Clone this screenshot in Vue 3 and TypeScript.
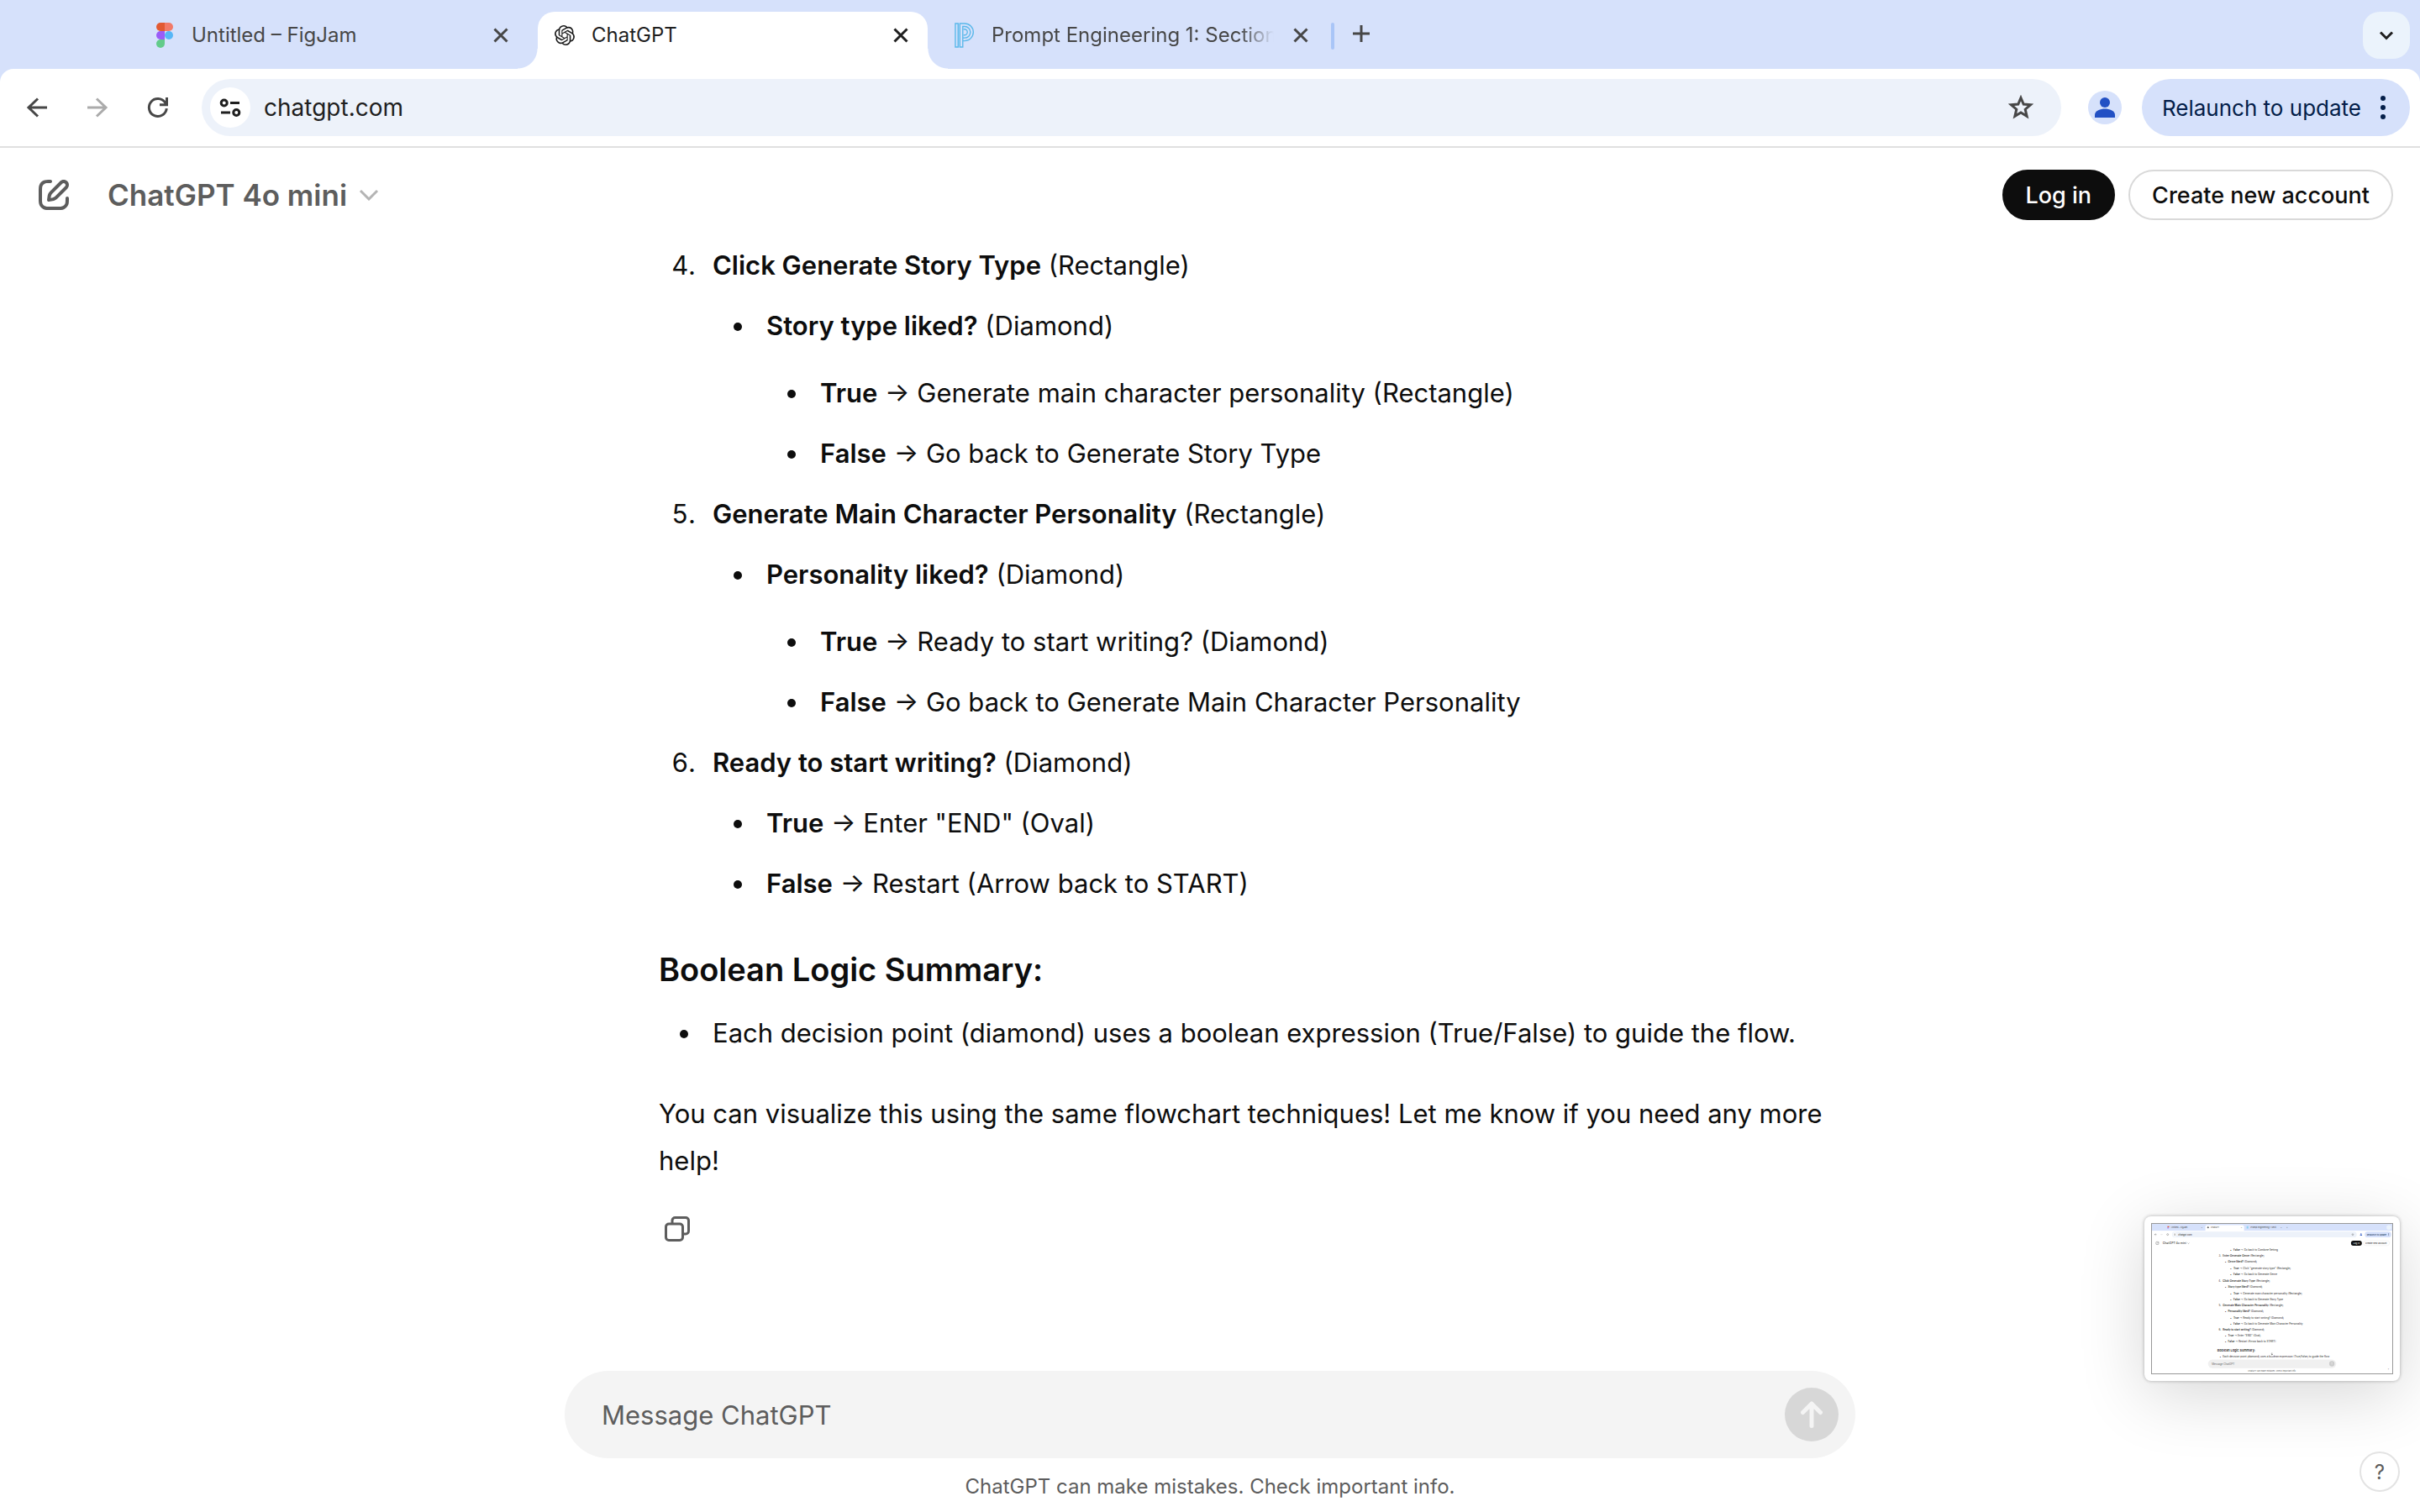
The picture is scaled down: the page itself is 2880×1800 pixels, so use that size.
<script setup lang="ts">
import { ref } from 'vue'

interface Branch {
  label: string
  text: string
}
interface SubItem extends Branch {
  branches: Branch[]
}
interface Step {
  title: string
  shape: string
  items: SubItem[]
}
interface MiniLine {
  x: number
  y: number
  marker: string
  bold: string
  text: string
}

const message = ref('')

const steps: Step[] = [
  {
    title: 'Click Generate Story Type',
    shape: '(Rectangle)',
    items: [
      {
        label: 'Story type liked?',
        text: '(Diamond)',
        branches: [
          { label: 'True', text: '→ Generate main character personality (Rectangle)' },
          { label: 'False', text: '→ Go back to Generate Story Type' },
        ],
      },
    ],
  },
  {
    title: 'Generate Main Character Personality',
    shape: '(Rectangle)',
    items: [
      {
        label: 'Personality liked?',
        text: '(Diamond)',
        branches: [
          { label: 'True', text: '→ Ready to start writing? (Diamond)' },
          { label: 'False', text: '→ Go back to Generate Main Character Personality' },
        ],
      },
    ],
  },
  {
    title: 'Ready to start writing?',
    shape: '(Diamond)',
    items: [
      { label: 'True', text: '→ Enter "END" (Oval)', branches: [] },
      { label: 'False', text: '→ Restart (Arrow back to START)', branches: [] },
    ],
  },
]

const miniLines: MiniLine[] = [
  { x: 976, y: 322, marker: '•', bold: 'False', text: '→ Go back to Combine Setting' },
  { x: 848, y: 396, marker: '3.', bold: 'Enter Generate Genre', text: '(Rectangle)' },
  { x: 912, y: 468, marker: '•', bold: 'Genre liked?', text: '(Diamond)' },
  { x: 976, y: 548, marker: '•', bold: 'True', text: '→ Click "generate story type" (Rectangle)' },
  { x: 976, y: 620, marker: '•', bold: 'False', text: '→ Go back to Generate Genre' },
  { x: 848, y: 694, marker: '4.', bold: 'Click Generate Story Type', text: '(Rectangle)' },
  { x: 912, y: 766, marker: '•', bold: 'Story type liked?', text: '(Diamond)' },
  { x: 976, y: 846, marker: '•', bold: 'True', text: '→ Generate main character personality (Rectangle)' },
  { x: 976, y: 918, marker: '•', bold: 'False', text: '→ Go back to Generate Story Type' },
  { x: 848, y: 990, marker: '5.', bold: 'Generate Main Character Personality', text: '(Rectangle)' },
  { x: 912, y: 1062, marker: '•', bold: 'Personality liked?', text: '(Diamond)' },
  { x: 976, y: 1142, marker: '•', bold: 'True', text: '→ Ready to start writing? (Diamond)' },
  { x: 976, y: 1214, marker: '•', bold: 'False', text: '→ Go back to Generate Main Character Personality' },
  { x: 848, y: 1286, marker: '6.', bold: 'Ready to start writing?', text: '(Diamond)' },
  { x: 912, y: 1358, marker: '•', bold: 'True', text: '→ Enter "END" (Oval)' },
  { x: 912, y: 1430, marker: '•', bold: 'False', text: '→ Restart (Arrow back to START)' },
]
</script>

<template>
  <div class="browser">
    <div class="tab-strip">
      <div class="tabs">
        <div class="tab">
          <svg class="favicon" viewBox="0 0 20 30" width="20" height="30" aria-hidden="true">
            <path d="M5 0h5v10H5A5 5 0 0 1 5 0z" fill="#e25a32" />
            <path d="M10 0h5a5 5 0 0 1 0 10h-5z" fill="#f27a68" />
            <path d="M5 10h5v10H5a5 5 0 0 1 0-10z" fill="#9a5cf7" />
            <circle cx="15" cy="15" r="5" fill="#56b6f7" />
            <path d="M5 20h5v5a5 5 0 1 1-5-5z" fill="#62cb8a" />
          </svg>
          <span class="tab-title">Untitled – FigJam</span>
          <button class="tab-close" type="button" aria-label="Close tab">
            <svg viewBox="0 0 24 24" width="24" height="24"><path d="M4.500 4.500l15 15M19.500 4.500l-15 15" /></svg>
          </button>
        </div>
        <div class="tab active">
          <svg class="favicon" viewBox="0 0 24 24" width="24" height="24" aria-hidden="true">
            <path fill="#1b1b1b" d="M22.2819 9.8211a5.9847 5.9847 0 0 0-.5157-4.9108 6.0462 6.0462 0 0 0-6.5098-2.9A6.0651 6.0651 0 0 0 4.9807 4.1818a5.9847 5.9847 0 0 0-3.9977 2.9 6.0462 6.0462 0 0 0 .7427 7.0966 5.98 5.98 0 0 0 .511 4.9107 6.051 6.051 0 0 0 6.5146 2.9001A5.9847 5.9847 0 0 0 13.2599 24a6.0557 6.0557 0 0 0 5.7718-4.2058 5.9894 5.9894 0 0 0 3.9977-2.9001 6.0557 6.0557 0 0 0-.7475-7.0729zm-9.022 12.6081a4.4755 4.4755 0 0 1-2.8764-1.0408l.1419-.0804 4.7783-2.7582a.7948.7948 0 0 0 .3927-.6813v-6.7369l2.02 1.1686a.071.071 0 0 1 .038.052v5.5826a4.504 4.504 0 0 1-4.4945 4.4944zm-9.6607-4.1254a4.4708 4.4708 0 0 1-.5346-3.0137l.142.0852 4.783 2.7582a.7712.7712 0 0 0 .7806 0l5.8428-3.3685v2.3324a.0804.0804 0 0 1-.0332.0615L9.74 19.9502a4.4992 4.4992 0 0 1-6.1408-1.6464zM2.3408 7.8956a4.485 4.485 0 0 1 2.3655-1.9728V11.6a.7664.7664 0 0 0 .3879.6765l5.8144 3.3543-2.0201 1.1685a.0757.0757 0 0 1-.071 0l-4.8303-2.7865A4.504 4.504 0 0 1 2.3408 7.872zm16.5963 3.8558L13.1038 8.364 15.1192 7.2a.0757.0757 0 0 1 .071 0l4.8303 2.7913a4.4944 4.4944 0 0 1-.6765 8.1042v-5.6772a.79.79 0 0 0-.407-.667zm2.0107-3.0231l-.142-.0852-4.7735-2.7818a.7759.7759 0 0 0-.7854 0L9.409 9.2297V6.8974a.0662.0662 0 0 1 .0284-.0615l4.8303-2.7866a4.4992 4.4992 0 0 1 6.6802 4.66zM8.3065 12.863l-2.02-1.1638a.0804.0804 0 0 1-.038-.0567V6.0742a4.4992 4.4992 0 0 1 7.3757-3.4537l-.142.0805L8.704 5.459a.7948.7948 0 0 0-.3927.6813zm1.0976-2.3654l2.602-1.4998 2.6069 1.4998v2.9994l-2.5974 1.4997-2.6067-1.4997Z" />
          </svg>
          <span class="tab-title">ChatGPT</span>
          <button class="tab-close" type="button" aria-label="Close tab">
            <svg viewBox="0 0 24 24" width="24" height="24"><path d="M4.500 4.500l15 15M19.500 4.500l-15 15" /></svg>
          </button>
        </div>
        <div class="tab">
          <svg class="favicon" viewBox="0 0 26 32" width="26" height="32" aria-hidden="true" fill="none" stroke="#5ab8ea" stroke-width="1.500">
            <path d="M1 .8h3.600v30.400H1z" />
            <path d="M6.800 31.200V.8h6.200a11 11 0 0 1 0 22.400h-2.400v-3.800H13a7.400 7.400 0 0 0 0-14.800h-2.400v26.600z" />
            <path d="M11.500 8.200h1.200a3.800 3.800 0 0 1 0 7.600h-1.200" />
          </svg>
          <span class="tab-title faded">Prompt Engineering 1: Section</span>
          <button class="tab-close" type="button" aria-label="Close tab">
            <svg viewBox="0 0 24 24" width="24" height="24"><path d="M4.500 4.500l15 15M19.500 4.500l-15 15" /></svg>
          </button>
        </div>
      </div>
      <span class="tab-divider"></span>
      <button class="new-tab" type="button" aria-label="New tab">
        <svg viewBox="0 0 24 24" width="24" height="24"><path d="M12 2v20M2 12h20" /></svg>
      </button>
      <button class="tab-search" type="button" aria-label="Search tabs">
        <svg viewBox="0 0 24 24" width="24" height="24"><path d="M5 8.500l7 7 7-7" /></svg>
      </button>
    </div>

    <div class="toolbar-wrap">
      <div class="toolbar">
        <div class="nav">
          <button type="button" aria-label="Back">
            <svg viewBox="0 0 24 24" width="24" height="24"><path d="M13 1.500L2 12l11 10.500M2 12h22" /></svg>
          </button>
          <button class="off" type="button" aria-label="Forward">
            <svg viewBox="0 0 24 24" width="24" height="24"><path d="M11 1.500L22 12 11 22.500M22 12H0" /></svg>
          </button>
          <button type="button" aria-label="Reload">
            <svg viewBox="0 0 24 24" width="24" height="24"><path d="M22.300 13.200A10.500 10.500 0 1 1 20.500 6l2 2.300M22.500 0v8.700H14" /></svg>
          </button>
        </div>
        <div class="omnibox">
          <button class="site-info" type="button" aria-label="View site information">
            <svg viewBox="0 0 24 20" width="24" height="20"><circle cx="4.700" cy="4.500" r="3.500" /><path d="M12 4.500h11M1 16h11" /><circle cx="19.300" cy="16" r="3.500" /></svg>
          </button>
          <input class="address" type="text" value="chatgpt.com" aria-label="Address" />
          <button class="bookmark" type="button" aria-label="Bookmark this tab">
            <svg viewBox="0 0 30 30" width="30" height="30"><path d="M15 3.500l3.200 7.600 8.200.7-6.200 5.400 1.900 8.100-7.100-4.300-7.100 4.300 1.900-8.100-6.200-5.400 8.200-.7z" /></svg>
          </button>
        </div>
        <button class="profile" type="button" aria-label="Profile">
          <svg viewBox="0 0 24 24" width="24" height="24"><circle cx="12" cy="6" r="6" /><path d="M0 24v-3.500C0 16 7 13.500 12 13.500S24 16 24 20.500V24z" /></svg>
        </button>
        <button class="relaunch" type="button">
          <span>Relaunch to update</span>
          <svg viewBox="0 0 8 28" width="8" height="28"><circle cx="4" cy="3" r="3" /><circle cx="4" cy="14" r="3" /><circle cx="4" cy="25" r="3" /></svg>
        </button>
      </div>
    </div>

    <main class="page">
      <header class="page-header">
        <button class="new-chat" type="button" aria-label="New chat">
          <svg viewBox="0 0 24 24" width="48" height="48"><path fill="#5d5d5d" fill-rule="evenodd" d="M15.6729 3.91287C16.8918 2.69392 18.8682 2.69392 20.0871 3.91287C21.3061 5.13182 21.3061 7.10813 20.0871 8.32708L14.1499 14.2643C13.3849 15.0293 12.3925 15.5255 11.3215 15.6785L9.14142 15.9899C8.82983 16.0344 8.51546 15.9297 8.29289 15.7071C8.07033 15.4845 7.96554 15.1701 8.01005 14.8586L8.32149 12.6785C8.47449 11.6075 8.97072 10.615 9.7357 9.85006L15.6729 3.91287ZM18.6729 5.32708C18.235 4.88918 17.525 4.88918 17.0871 5.32708L11.1499 11.2643C10.6909 11.7233 10.3932 12.3187 10.3014 12.9613L10.1785 13.8215L11.0386 13.6986C11.6812 13.6068 12.2767 13.3091 12.7357 12.8501L18.6729 6.91287C19.1108 6.47497 19.1108 5.76499 18.6729 5.32708ZM11 3.99929C11.0004 4.55157 10.5531 4.99963 10.0008 5.00007C9.00227 5.00084 8.29769 5.00827 7.74651 5.06064C7.20685 5.11191 6.88488 5.20117 6.63803 5.32695C6.07354 5.61457 5.6146 6.07351 5.32698 6.63799C5.19279 6.90135 5.10062 7.24904 5.05118 7.8542C5.00078 8.47105 5 9.26336 5 10.4V13.6C5 14.7366 5.00078 15.5289 5.05118 16.1457C5.10062 16.7509 5.19279 17.0986 5.32698 17.3619C5.6146 17.9264 6.07354 18.3854 6.63803 18.673C6.90138 18.8072 7.24907 18.8993 7.85424 18.9488C8.47108 18.9992 9.26339 19 10.4 19H13.6C14.7366 19 15.5289 18.9992 16.1458 18.9488C16.7509 18.8993 17.0986 18.8072 17.362 18.673C17.9265 18.3854 18.3854 17.9264 18.673 17.3619C18.7988 17.1151 18.8881 16.7931 18.9393 16.2535C18.9917 15.7023 18.9991 14.9977 18.9999 13.9992C19.0003 13.4469 19.4484 12.9995 20.0007 13C20.553 13.0004 21.0003 13.4485 20.9999 14.0007C20.9991 14.9789 20.9932 15.7808 20.9304 16.4426C20.8664 17.116 20.7385 17.7136 20.455 18.2699C19.9757 19.2107 19.2108 19.9756 18.27 20.455C17.6777 20.7568 17.0375 20.8826 16.3086 20.9421C15.6008 21 14.7266 21 13.6428 21H10.3572C9.27339 21 8.39925 21 7.69138 20.9421C6.96253 20.8826 6.32234 20.7568 5.73005 20.455C4.78924 19.9756 4.02433 19.2107 3.54497 18.2699C3.24318 17.6776 3.11737 17.0374 3.05782 16.3086C2.99998 15.6007 2.99999 14.7266 3 13.6428V10.3572C2.99999 9.27337 2.99998 8.39922 3.05782 7.69134C3.11737 6.96249 3.24318 6.3223 3.54497 5.73001C4.02433 4.7892 4.78924 4.0243 5.73005 3.54493C6.28633 3.26149 6.88399 3.13358 7.55735 3.06961C8.21919 3.00673 9.02103 3.00083 9.99922 3.00007C10.5515 2.99964 10.9996 3.447 11 3.99929Z" /></svg>
        </button>
        <button class="model" type="button">
          <span>ChatGPT 4o mini</span>
          <svg viewBox="0 0 24 14" width="24" height="14"><path d="M2 2l10 10L22 2" /></svg>
        </button>
        <div class="auth">
          <button class="login" type="button">Log in</button>
          <button class="signup" type="button">Create new account</button>
        </div>
      </header>

      <article class="thread">
        <ol start="4">
          <li v-for="step in steps" :key="step.title">
            <strong>{{ step.title }}</strong> {{ step.shape }}
            <ul>
              <li v-for="item in step.items" :key="item.label">
                <strong>{{ item.label }}</strong> {{ item.text }}
                <ul v-if="item.branches.length" class="branches">
                  <li v-for="b in item.branches" :key="b.label">
                    <strong>{{ b.label }}</strong> {{ b.text }}
                  </li>
                </ul>
              </li>
            </ul>
          </li>
        </ol>
        <h3>Boolean Logic Summary:</h3>
        <ul>
          <li>Each decision point (diamond) uses a boolean expression (True/False) to guide the flow.</li>
        </ul>
        <p>You can visualize this using the same flowchart techniques! Let me know if you need any more help!</p>
        <button class="copy" type="button" aria-label="Copy">
          <svg viewBox="0 0 30 30" width="30" height="30">
            <rect x="1.500" y="9" width="20" height="19.500" rx="3.500" />
            <path d="M9 9V5A3.500 3.500 0 0 1 12.500 1.500H25A3.500 3.500 0 0 1 28.500 5V17.500A3.500 3.500 0 0 1 25 21h-3.500" />
          </svg>
        </button>
      </article>

      <footer class="dock">
        <form class="composer" @submit.prevent>
          <input v-model="message" type="text" placeholder="Message ChatGPT" aria-label="Message ChatGPT" />
          <button type="submit" aria-label="Send message">
            <svg viewBox="0 0 26 32" width="26" height="32"><path d="M13 29.500V3M2.500 13.500L13 3l10.500 10.500" /></svg>
          </button>
        </form>
        <p class="notice">ChatGPT can make mistakes. Check important info.</p>
      </footer>
    </main>

    <div class="shot">
      <svg viewBox="0 0 2880 1800" preserveAspectRatio="none" role="img" aria-label="Screenshot preview">
        <rect width="2880" height="1800" fill="#fff" />
        <rect width="2880" height="82" fill="#d6e1fb" />
        <rect x="640" y="14" width="464" height="80" rx="20" fill="#fff" />
        <rect x="186" y="28" width="20" height="14" fill="#e25a32" />
        <rect x="186" y="42" width="12" height="14" fill="#9a5cf7" />
        <circle cx="672" cy="42" r="10" fill="#555" />
        <rect x="1135" y="28" width="20" height="28" fill="#8fd0f2" />
        <rect x="2812" y="14" width="56" height="56" rx="20" fill="#ebf3fc" />
        <g font-size="24" fill="#444">
          <text x="229" y="51">Untitled – FigJam</text>
          <text x="705" y="51">ChatGPT</text>
          <text x="1181" y="51">Prompt Engineering 1: Secti</text>
          <text x="588" y="51">×</text>
          <text x="1064" y="51">×</text>
          <text x="1540" y="51">×</text>
          <text x="1612" y="51">+</text>
        </g>
        <rect x="240" y="94" width="2214" height="68" rx="34" fill="#edf2fa" />
        <rect x="2550" y="94" width="318" height="68" rx="34" fill="#d6e1fb" />
        <circle cx="274" cy="128" r="24" fill="#fff" />
        <g fill="none" stroke="#555" stroke-width="4">
          <path d="M44 117l-11 11 11 11M33 128h23M262 122h24M262 134h24" />
          <circle cx="188" cy="128" r="10" />
          <circle cx="2406" cy="128" r="9" />
          <rect x="48" y="216" width="32" height="32" rx="8" />
          <path d="M60 238l20-20M428 229l10 9 10-9" />
        </g>
        <path d="M104 128h23" stroke="#bbb" stroke-width="4" />
        <circle cx="2506" cy="122" r="7" fill="#2250c4" />
        <rect x="2494" y="130" width="24" height="10" fill="#2250c4" />
        <text x="314" y="138" font-size="28" fill="#222">chatgpt.com</text>
        <text x="2575" y="138" font-size="26" fill="#041e49">Relaunch to update</text>
        <path d="M2836 114v28" stroke="#041e49" stroke-width="6" stroke-dasharray="6 5" />
        <rect x="2385" y="202" width="131" height="60" rx="30" fill="#0d0d0d" />
        <rect x="2533" y="203" width="314" height="58" rx="29" fill="none" stroke="#ddd" stroke-width="3" />
        <text x="128" y="244" font-size="35" font-weight="600" fill="#5d5d5d">ChatGPT 4o mini</text>
        <text x="2412" y="242" font-size="27" fill="#fff">Log in</text>
        <text x="2559" y="242" font-size="27" fill="#0d0d0d">Create new account</text>
        <g font-size="31" fill="#222">
          <template v-for="line in miniLines" :key="line.y">
            <text :x="line.x - 21" :y="line.y" text-anchor="end">{{ line.marker }}</text>
            <text :x="line.x" :y="line.y"><tspan font-weight="600">{{ line.bold }}</tspan>{{ ' ' + line.text }}</text>
          </template>
          <text x="784" y="1534" font-size="38" font-weight="600">Boolean Logic Summary:</text>
          <text x="827" y="1608" text-anchor="end">•</text>
          <text x="848" y="1608">Each decision point (diamond) uses a boolean expression (True/False) to guide the flow</text>
        </g>
        <circle cx="1438" cy="1566" r="28" fill="#fff" />
        <path d="M1438 1552v26M1428 1568l10 10 10-10" fill="none" stroke="#333" stroke-width="5" />
        <rect x="672" y="1632" width="1536" height="104" rx="52" fill="#f0f0f0" />
        <circle cx="2156" cy="1684" r="32" fill="#ccc" />
        <path d="M2156 1698v-28M2146 1680l10-10 10 10" fill="none" stroke="#f4f4f4" stroke-width="4" />
        <text x="717" y="1696" font-size="31" fill="#666">Message ChatGPT</text>
        <text x="1440" y="1777" font-size="24" text-anchor="middle" fill="#5d5d5d">ChatGPT can make mistakes. Check important info.</text>
        <text x="2826" y="1762" font-size="24" fill="#5d5d5d">?</text>
      </svg>
    </div>
    <button class="help" type="button" aria-label="Help">?</button>
  </div>
</template>

<style>
html,
body {
  margin: 0;
  background: #fff;
}
</style>

<style scoped>
.browser {
  position: relative;
  display: flex;
  flex-direction: column;
  min-height: 100vh;
  font-family: Inter, "Liberation Sans", sans-serif;
  color: #0d0d0d;
  background: #fff;
}
button {
  display: flex;
  align-items: center;
  justify-content: center;
  flex: none;
  padding: 0;
  border: 0;
  background: none;
  color: inherit;
  font: inherit;
  cursor: pointer;
}
input {
  flex: 1;
  min-width: 0;
  padding: 0;
  border: 0;
  outline: 0;
  background: none;
  color: inherit;
  font: inherit;
}
svg {
  display: block;
  flex: none;
}

/* Tab strip */
.tab-strip {
  display: flex;
  align-items: flex-start;
  height: 68px;
  padding: 14px 12px 0 164px;
  background: #d6e1fb;
}
.tabs {
  display: flex;
  gap: 12px;
}
.tab {
  position: relative;
  display: flex;
  align-items: center;
  box-sizing: border-box;
  width: 464px;
  height: 68px;
  padding: 0 20px 12px;
  color: #474747;
  font-size: 24px;
}
.tab.active {
  border-radius: 20px 20px 0 0;
  background: #fff;
  color: #1f1f1f;
}
.tab.active::before,
.tab.active::after {
  content: "";
  position: absolute;
  bottom: 0;
  width: 24px;
  height: 24px;
}
.tab.active::before {
  right: 100%;
  background: radial-gradient(circle at 0 0, transparent 23px, #fff 24px);
}
.tab.active::after {
  left: 100%;
  background: radial-gradient(circle at 100% 0, transparent 23px, #fff 24px);
}
.favicon {
  width: 24px;
  overflow: visible;
}
.tab-title {
  flex: 1;
  min-width: 0;
  margin: 0 20px;
  overflow: hidden;
  line-height: 36px;
  white-space: nowrap;
}
.tab-title.faded {
  mask-image: linear-gradient(to left, transparent, #000 40px);
}
.tab-close svg,
.new-tab svg,
.tab-search svg {
  fill: none;
  stroke: currentColor;
  stroke-width: 3;
}
.tab-divider {
  width: 4px;
  height: 32px;
  margin: 13px 20px 0 4px;
  border-radius: 2px;
  background: #a9c5f7;
}
.new-tab {
  margin-top: 14px;
  color: #474747;
}
.tab-search {
  width: 56px;
  height: 56px;
  margin-left: auto;
  border-radius: 20px;
  background: #ebf3fc;
  color: #1f1f1f;
}

/* Toolbar */
.toolbar-wrap {
  background: #d6e1fb;
}
.toolbar {
  display: flex;
  align-items: center;
  box-sizing: border-box;
  height: 94px;
  padding: 0 12px 0 32px;
  border-bottom: 2px solid #e0e0e0;
  border-radius: 16px 16px 0 0;
  background: #fff;
  font-size: 28px;
}
.nav {
  display: flex;
  gap: 48px;
  margin-right: 40px;
  color: #474747;
}
.nav .off {
  color: #ababab;
}
.nav svg,
.site-info svg {
  overflow: visible;
  fill: none;
  stroke: currentColor;
  stroke-width: 3;
}
.omnibox {
  display: flex;
  flex: 1;
  align-items: center;
  height: 68px;
  padding: 0 33px 0 10px;
  border-radius: 34px;
  background: #edf2fa;
  color: #1f1f1f;
}
.site-info {
  width: 48px;
  height: 48px;
  margin-right: 16px;
  border-radius: 50%;
  background: #fff;
}
.bookmark svg {
  fill: none;
  stroke: #474747;
  stroke-width: 3;
}
.profile {
  width: 40px;
  height: 40px;
  margin: 0 24px 0 32px;
  border-radius: 50%;
  background: #d6e1fb;
}
.profile svg {
  fill: #2250c4;
}
.relaunch {
  gap: 22px;
  height: 68px;
  padding: 0 28px 0 24px;
  border-radius: 34px;
  background: #d6e1fb;
  color: #041e49;
  font-size: 26px;
}
.relaunch svg {
  fill: currentColor;
}

/* Page */
.page {
  display: flex;
  flex: 1;
  flex-direction: column;
}
.page-header {
  display: flex;
  align-items: center;
  height: 112px;
  padding: 0 32px 0 40px;
}
.model {
  gap: 14px;
  margin-left: 40px;
  color: #5d5d5d;
  font-size: 35px;
  font-weight: 600;
}
.model svg {
  fill: none;
  stroke: #b4b4b4;
  stroke-width: 3;
}
.auth {
  display: flex;
  gap: 16px;
  margin-left: auto;
  font-size: 27px;
  font-weight: 500;
}
.auth button {
  box-sizing: border-box;
  height: 60px;
  padding: 0 26px;
  border: 2px solid #d9d9d9;
  border-radius: 30px;
}
.auth .login {
  border-color: #0d0d0d;
  background: #0d0d0d;
  color: #fff;
}

/* Conversation */
.thread {
  flex: 1;
  box-sizing: border-box;
  width: 100%;
  max-width: 1536px;
  margin: 0 auto;
  padding-left: 112px;
  font-size: 31px;
  line-height: 56px;
}
.thread ol,
.thread ul {
  margin: 0;
  padding-left: 52px;
}
.thread ul {
  list-style: disc;
}
.thread li {
  padding-left: 12px;
}
.thread li + li,
.thread li > ul {
  margin-top: 16px;
}
.thread li > .branches {
  margin-top: 24px;
}
.thread strong,
.thread h3 {
  font-weight: 600;
}
.thread h3 {
  margin: 46px 0 20px;
  font-size: 38px;
}
.thread p {
  margin: 40px 0 38px;
}
.copy {
  margin-left: 7px;
}
.copy svg {
  fill: none;
  stroke: #5d5d5d;
  stroke-width: 3;
}

/* Composer */
.dock {
  box-sizing: border-box;
  width: 100%;
  max-width: 1536px;
  margin: 0 auto;
}
.composer {
  display: flex;
  align-items: center;
  box-sizing: border-box;
  height: 104px;
  padding: 0 20px 0 44px;
  border-radius: 52px;
  background: #f4f4f4;
  font-size: 31px;
}
.composer input::placeholder {
  color: #5d5d5d;
  opacity: 1;
}
.composer button {
  width: 64px;
  height: 64px;
  border-radius: 50%;
  background: #d7d7d7;
}
.composer svg {
  fill: none;
  stroke: #f4f4f4;
  stroke-width: 5;
  stroke-linecap: round;
  stroke-linejoin: round;
}
.notice {
  margin: 0;
  padding: 18px 0 14px;
  color: #5d5d5d;
  font-size: 24px;
  line-height: 32px;
  text-align: center;
}

/* Floating items */
.shot {
  position: fixed;
  right: 24px;
  bottom: 156px;
  box-sizing: border-box;
  width: 304px;
  height: 196px;
  padding: 8px;
  border-radius: 8px;
  background: #fff;
  box-shadow: 0 0 4px rgba(0, 0, 0, 0.3), 0 16px 80px rgba(0, 0, 0, 0.16);
}
.shot svg {
  box-sizing: border-box;
  width: 100%;
  height: 100%;
  border: 1px solid #999;
}
.help {
  position: fixed;
  right: 24px;
  bottom: 24px;
  box-sizing: border-box;
  width: 48px;
  height: 48px;
  border: 2px solid #e3e3e3;
  border-radius: 50%;
  background: #fff;
  color: #5d5d5d;
  font-size: 24px;
}
</style>
